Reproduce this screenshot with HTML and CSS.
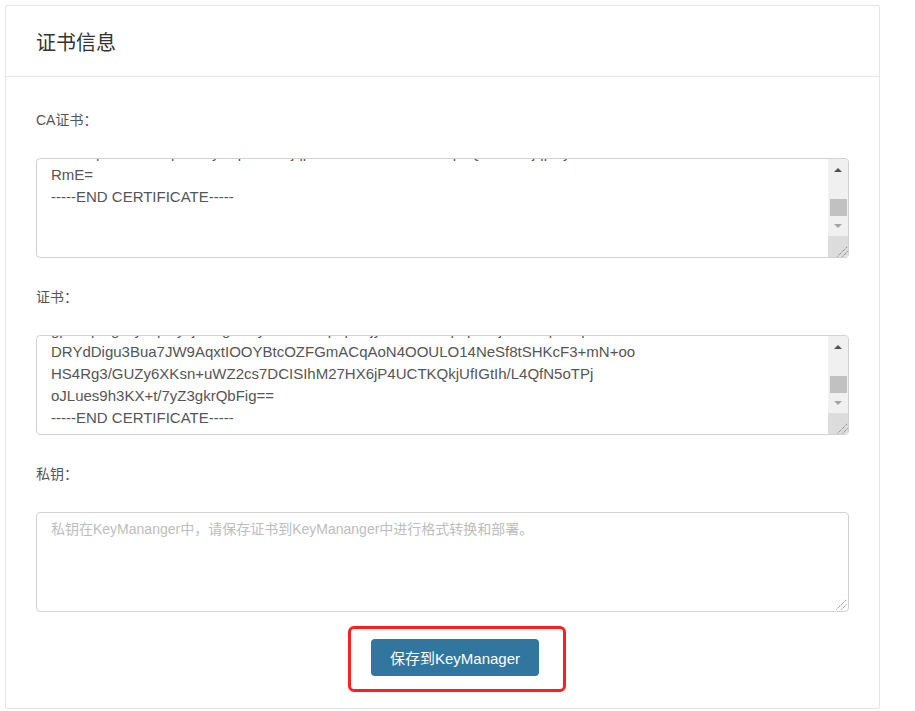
FILE: index.html
```html
<!DOCTYPE html>
<html lang="zh-CN">
<head>
    <meta charset="UTF-8">
    <meta name="viewport" content="width=device-width, initial-scale=1.0">
    <title>证书信息</title>
    <link rel="stylesheet" href="styles.css">
</head>
<body>
    <div class="panel">
        <div class="panel-heading">证书信息</div>
        <div class="panel-body">
            <!-- CA证书 -->
            <div class="form-group">
                <label>CA证书：</label>
                <div class="text-box">
                    <textarea class="form-control cert-text" readonly>-----BEGIN CERTIFICATE-----
MIIDdzCCAl+gAwIBAgIEAgAAuTANBgkqhkiG9w0BAQUFADBaMQswCQYDVQQGEwJJ
RTESMBAGA1UEChMJQmFsdGltb3JlMRMwEQYDVQQLEwpDeWJlclRydXN0MSIwIAYD
VQQDExlCYWx0aW1vcmUgQ3liZXJUcnVzdCBSb290MB4XDTAwMDUxMjE4NDYwMFoX
DTI1MDUxMjIzNTkwMFowWjELMAkGA1UEBhMCSUUxEjAQBgNVBAoTCUJhbHRpbW9y
ZTETMBEGA1UECxMKQ3liZXJUcnVzdDEiMCAGA1UEAxMZQmFsdGltb3JlIEN5YmVy
ksLi4Epd7tmkNzcp4hcnyaApL1HvYjqpk9sHrRmE2k6mYxEqtnQ4m7DtvjqpRyRJ
RmE=
-----END CERTIFICATE-----

</textarea>
                    <div class="scrollbar">
                        <span class="sb-btn sb-up"></span>
                        <span class="sb-track"><span class="sb-thumb"></span></span>
                        <span class="sb-btn sb-down"></span>
                        <span class="sb-corner">
                            <svg width="20" height="21" viewBox="0 0 20 21"><path d="M9.5 20.5 L19.5 10.5 M14.5 20.5 L19.5 15.5" stroke="#6a6a6a" stroke-width="1" stroke-dasharray="1 1" fill="none"/></svg>
                        </span>
                    </div>
                </div>
            </div>

            <!-- 证书 -->
            <div class="form-group">
                <label>证书：</label>
                <div class="text-box">
                    <textarea class="form-control cert-text" readonly>-----BEGIN CERTIFICATE-----
MIIFPjCCBCagAwIBAgIQDpkBiWvPq7mGkeVzUjT7cjANBgkqhkiG9w0BAQsFADBy
MQswCQYDVQQGEwJDTjElMCMGA1UEChMcVHJ1c3RBc2lhIFRlY2hub2xvZ2llcywg
SW5jLjEdMBsGA1UECxMURG9tYWluIFZhbGlkYXRlZCBTU0wxHTAbBgNVBAMTFFRy
dXN0QXNpYSBUTFMgUlNBIENBMB4XDTIxMDMxNTAwMDAwMFoXDTIyMDMxNDIzNTk1
gp8Eqd9gJxyKq2byxjY1hgUa0yHLfwnJsqoqW2jyYw8h7Xaq0qlT2JjFUmTq1Mdp
DRYdDigu3Bua7JW9AqxtIOOYBtcOZFGmACqAoN4OOULO14NeSf8tSHKcF3+mN+oo
HS4Rg3/GUZy6XKsn+uWZ2cs7DCISIhM27HX6jP4UCTKQkjUfIGtIh/L4QfN5oTPj
oJLues9h3KX+t/7yZ3gkrQbFig==
-----END CERTIFICATE-----</textarea>
                    <div class="scrollbar">
                        <span class="sb-btn sb-up"></span>
                        <span class="sb-track"><span class="sb-thumb"></span></span>
                        <span class="sb-btn sb-down"></span>
                        <span class="sb-corner">
                            <svg width="20" height="21" viewBox="0 0 20 21"><path d="M9.5 20.5 L19.5 10.5 M14.5 20.5 L19.5 15.5" stroke="#6a6a6a" stroke-width="1" stroke-dasharray="1 1" fill="none"/></svg>
                        </span>
                    </div>
                </div>
            </div>

            <!-- 私钥 -->
            <div class="form-group key-group">
                <label>私钥：</label>
                <div class="text-box">
                    <textarea class="form-control key-text" placeholder="私钥在KeyMananger中，请保存证书到KeyMananger中进行格式转换和部署。" readonly></textarea>
                    <svg class="grip" width="12" height="12" viewBox="0 0 12 12"><path d="M1.5 11.5 L11.5 1.5 M6.5 11.5 L11.5 6.5" stroke="#6a6a6a" stroke-width="1" stroke-dasharray="1 1" fill="none"/></svg>
                </div>
            </div>

            <div class="actions">
                <span class="highlight">
                    <button class="btn-primary">保存到KeyManager</button>
                </span>
            </div>
        </div>
    </div>

    <script src="script.js"></script>
</body>
</html>
```

FILE: script.js
```js
// show the end of each certificate
document.querySelectorAll('.cert-text').forEach(function (box) {
    box.scrollTop = box.scrollHeight;
});
```

FILE: styles.css
```css
* {
    margin: 0;
    padding: 0;
    box-sizing: border-box;
}

body {
    font-family: 'Liberation Sans', 'Noto Sans CJK SC', sans-serif;
    font-size: 14px;
    color: #555;
    background: #fff;
    padding: 5px;
}

.panel {
    width: 875px;
    border: 1px solid #e6e6e6;
    border-radius: 2px;
    background: #fff;
}

.panel-heading {
    height: 71px;
    display: flex;
    align-items: center;
    padding: 0 30px;
    font-size: 20px;
    color: #333;
    border-bottom: 1px solid #e6e6e6;
}

.panel-body {
    padding: 33px 30px 16px;
}

.form-group {
    margin-bottom: 29px;
}

.form-group.key-group {
    margin-bottom: 14px;
}

.form-group label {
    display: block;
    height: 20px;
    line-height: 20px;
    margin-bottom: 28px;
    color: #555;
}

/* textarea with its own scrollbar column */
.text-box {
    position: relative;
    display: flex;
    height: 100px;
    border: 1px solid #d2d2d2;
    border-radius: 4px;
    overflow: hidden;
    background: #fff;
}

.form-control {
    flex: 1;
    min-width: 0;
    height: 98px;
    padding: 5px 14px;
    border: none;
    font-family: inherit;
    font-size: 15px;
    line-height: 22px;
    color: #555;
    resize: none;
    outline: none;
    white-space: pre;
    overflow: hidden;
    background: transparent;
}

.key-text {
    font-size: 14px;
}

.form-control::placeholder {
    color: #bdbdbd;
}

.scrollbar {
    width: 20px;
    display: flex;
    flex-direction: column;
    background: #f0f0f0;
}

.sb-btn {
    height: 20px;
    display: flex;
    align-items: center;
    justify-content: center;
}

.sb-btn::before {
    content: '';
    width: 0;
    height: 0;
    border-left: 4px solid transparent;
    border-right: 4px solid transparent;
}

.sb-up::before {
    border-bottom: 4px solid #505050;
    margin-top: 2px;
}

.sb-down::before {
    border-top: 4px solid #a3a3a3;
    margin-bottom: 1px;
}

.sb-track {
    flex: 1;
    display: flex;
    flex-direction: column;
    justify-content: flex-end;
}

.sb-thumb {
    height: 17px;
    margin: 0 1px 0 2px;
    background: #c1c1c1;
}

.sb-corner {
    height: 21px;
    background: #dcdcdc;
}

.sb-corner svg,
.grip {
    display: block;
}

.grip {
    position: absolute;
    right: 1px;
    bottom: 1px;
}

.actions {
    display: flex;
    justify-content: center;
    padding-left: 29px;
}

.highlight {
    display: block;
    padding: 10px 24px 13px 20px;
    border: 3px solid #ff1f1f;
    border-radius: 6px;
}

.btn-primary {
    display: block;
    width: 168px;
    height: 37px;
    border: none;
    border-radius: 4px;
    background-color: #31769f;
    color: #fff;
    font-family: inherit;
    font-size: 15px;
    cursor: pointer;
}

.btn-primary:hover {
    background-color: #286090;
}
```
